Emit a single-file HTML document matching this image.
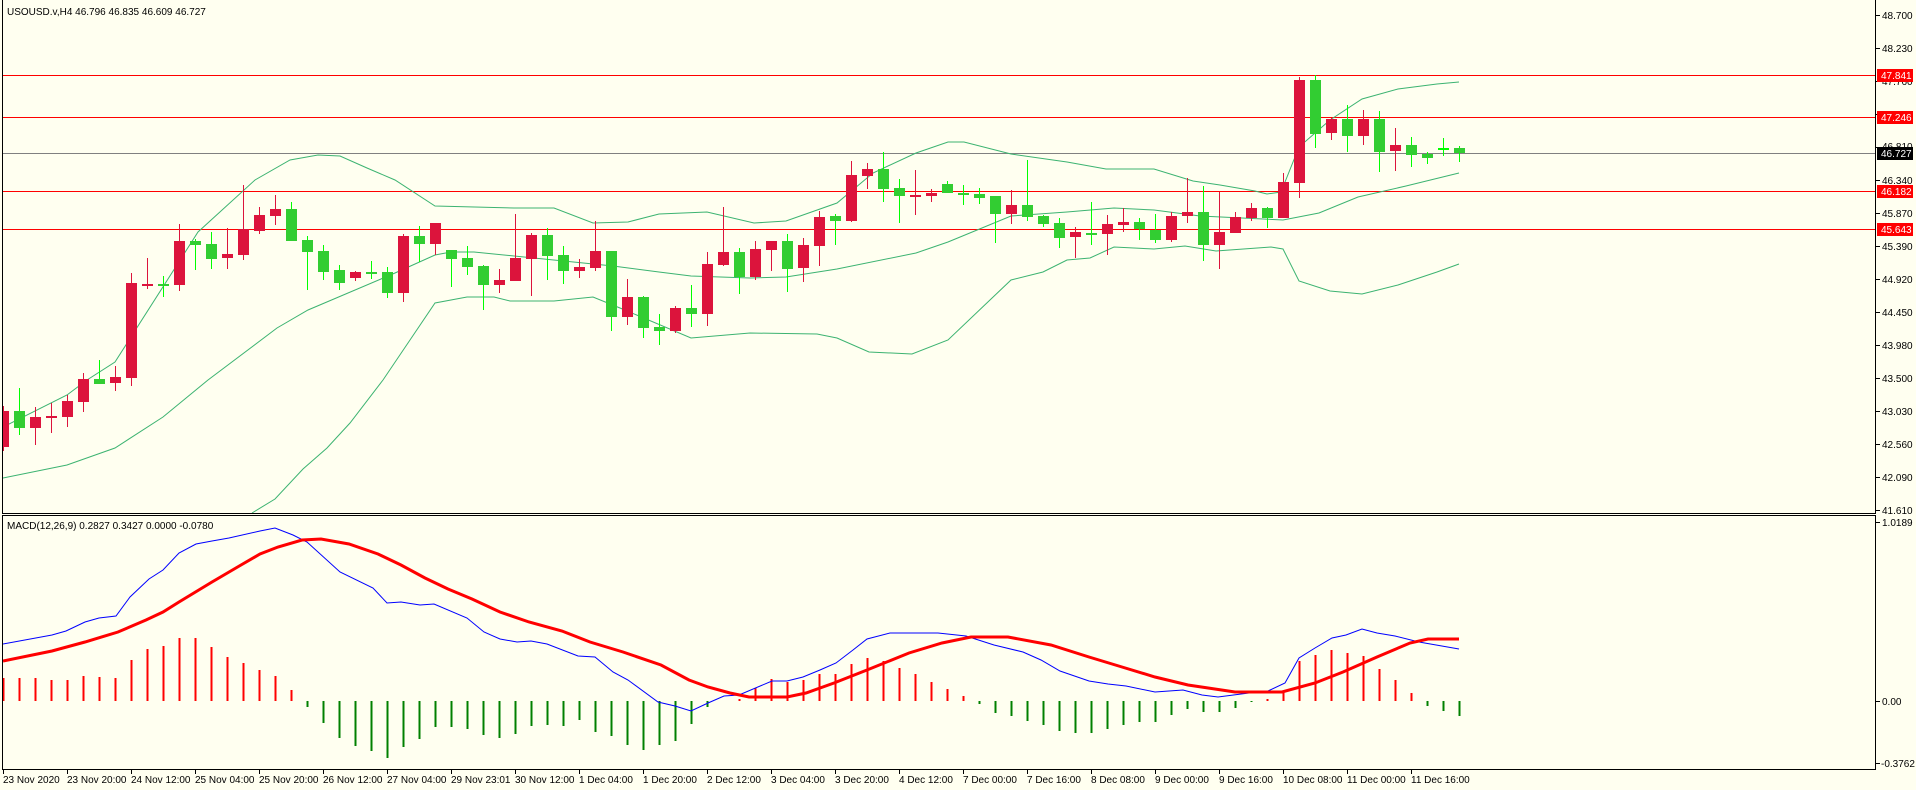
<!DOCTYPE html>
<html><head><meta charset="utf-8"><style>
html,body{margin:0;padding:0;background:#FFFFF0;}
svg{display:block;}
text{font-family:"Liberation Sans",sans-serif;font-size:10px;fill:#000;}
</style></head><body>
<svg width="1916" height="790" viewBox="0 0 1916 790" xmlns="http://www.w3.org/2000/svg">
<rect x="0" y="0" width="1916" height="790" fill="#FFFFF0"/>
<defs>
<clipPath id="mc"><rect x="3" y="0" width="1872" height="513"/></clipPath>
<clipPath id="dc"><rect x="3" y="516" width="1872" height="253"/></clipPath>
</defs>
<g clip-path="url(#mc)">
<!-- horizontal lines -->
<line x1="3" y1="75.5" x2="1875" y2="75.5" stroke="#f00" stroke-width="1"/>
<line x1="3" y1="117.5" x2="1875" y2="117.5" stroke="#f00" stroke-width="1"/>
<line x1="3" y1="153.5" x2="1875" y2="153.5" stroke="#808080" stroke-width="1"/>
<line x1="3" y1="191.5" x2="1875" y2="191.5" stroke="#f00" stroke-width="1"/>
<line x1="3" y1="229.5" x2="1875" y2="229.5" stroke="#f00" stroke-width="1"/>
<!-- bollinger -->
<g fill="none" stroke="#3CB371" stroke-width="1">
<polyline points="3,427 67,395 87,380 115,362 198,232 255,180 290,160 318,155 340,156 367,168 395,180 435,206 514,208 554,208 593,223 628,222 659,214 707,212 754,223 786,221 837,203 873,173 916,153 948,142 964,142 1011,154 1067,162 1106,169 1154,169 1193,181 1220,185 1255,191 1267,194 1281,192 1299,147 1330,120 1362,99 1398,89 1437,84 1459,82"/>
<polyline points="3,478 67,465 115,448 163,417 208,380 277,328 308,310 395,273 435,255 451,252 474,252 613,266 659,272 691,276 750,278 786,277 837,269 916,253 948,242 1011,216 1067,212 1114,208 1154,210 1200,216 1283,220 1319,213 1358,197 1406,186 1459,173"/>
<polyline points="252,513 275,499 303,469 327,448 350,423 383,380 410,340 435,303 467,297 494,297 510,301 554,301 593,297 620,308 691,338 750,333 817,334 837,338 869,352 912,354 948,340 1011,280 1043,272 1067,260 1090,258 1114,247 1154,249 1185,246 1216,251 1271,247 1283,249 1299,281 1330,291 1362,294 1398,285 1437,272 1459,264"/>
</g>
<!-- candles -->
<g id="candles">
<rect x="3" y="406" width="1" height="45" fill="#DC143C"/><rect x="-2" y="411" width="11" height="36" fill="#DC143C"/>
<rect x="19" y="388" width="1" height="47" fill="#00FF00"/><rect x="14" y="411" width="11" height="17" fill="#32CD32"/>
<rect x="35" y="407" width="1" height="38" fill="#DC143C"/><rect x="30" y="417" width="11" height="11" fill="#DC143C"/>
<rect x="51" y="403" width="1" height="30" fill="#DC143C"/><rect x="46" y="416" width="11" height="2" fill="#DC143C"/>
<rect x="67" y="395" width="1" height="32" fill="#DC143C"/><rect x="62" y="401" width="11" height="16" fill="#DC143C"/>
<rect x="83" y="373" width="1" height="39" fill="#DC143C"/><rect x="78" y="379" width="11" height="23" fill="#DC143C"/>
<rect x="99" y="360" width="1" height="24" fill="#00FF00"/><rect x="94" y="379" width="11" height="5" fill="#32CD32"/>
<rect x="115" y="366" width="1" height="25" fill="#DC143C"/><rect x="110" y="377" width="11" height="6" fill="#DC143C"/>
<rect x="131" y="273" width="1" height="113" fill="#DC143C"/><rect x="126" y="283" width="11" height="95" fill="#DC143C"/>
<rect x="147" y="258" width="1" height="31" fill="#DC143C"/><rect x="142" y="284" width="11" height="2" fill="#DC143C"/>
<rect x="163" y="276" width="1" height="21" fill="#00FF00"/><rect x="158" y="284" width="11" height="2" fill="#32CD32"/>
<rect x="179" y="224" width="1" height="67" fill="#DC143C"/><rect x="174" y="241" width="11" height="44" fill="#DC143C"/>
<rect x="195" y="239" width="1" height="31" fill="#00FF00"/><rect x="190" y="241" width="11" height="4" fill="#32CD32"/>
<rect x="211" y="232" width="1" height="37" fill="#00FF00"/><rect x="206" y="244" width="11" height="15" fill="#32CD32"/>
<rect x="227" y="228" width="1" height="41" fill="#DC143C"/><rect x="222" y="254" width="11" height="4" fill="#DC143C"/>
<rect x="243" y="185" width="1" height="75" fill="#DC143C"/><rect x="238" y="229" width="11" height="26" fill="#DC143C"/>
<rect x="259" y="207" width="1" height="27" fill="#DC143C"/><rect x="254" y="215" width="11" height="16" fill="#DC143C"/>
<rect x="275" y="195" width="1" height="30" fill="#DC143C"/><rect x="270" y="209" width="11" height="7" fill="#DC143C"/>
<rect x="291" y="202" width="1" height="39" fill="#00FF00"/><rect x="286" y="209" width="11" height="32" fill="#32CD32"/>
<rect x="307" y="236" width="1" height="54" fill="#00FF00"/><rect x="302" y="240" width="11" height="12" fill="#32CD32"/>
<rect x="323" y="245" width="1" height="35" fill="#00FF00"/><rect x="318" y="251" width="11" height="21" fill="#32CD32"/>
<rect x="339" y="265" width="1" height="25" fill="#00FF00"/><rect x="334" y="270" width="11" height="13" fill="#32CD32"/>
<rect x="355" y="271" width="1" height="10" fill="#DC143C"/><rect x="350" y="272" width="11" height="6" fill="#DC143C"/>
<rect x="371" y="261" width="1" height="18" fill="#00FF00"/><rect x="366" y="272" width="11" height="2" fill="#32CD32"/>
<rect x="387" y="267" width="1" height="31" fill="#00FF00"/><rect x="382" y="272" width="11" height="21" fill="#32CD32"/>
<rect x="403" y="234" width="1" height="68" fill="#DC143C"/><rect x="398" y="236" width="11" height="57" fill="#DC143C"/>
<rect x="419" y="226" width="1" height="36" fill="#00FF00"/><rect x="414" y="236" width="11" height="8" fill="#32CD32"/>
<rect x="435" y="223" width="1" height="32" fill="#DC143C"/><rect x="430" y="223" width="11" height="21" fill="#DC143C"/>
<rect x="451" y="250" width="1" height="37" fill="#00FF00"/><rect x="446" y="250" width="11" height="9" fill="#32CD32"/>
<rect x="467" y="246" width="1" height="29" fill="#00FF00"/><rect x="462" y="258" width="11" height="9" fill="#32CD32"/>
<rect x="483" y="265" width="1" height="45" fill="#00FF00"/><rect x="478" y="266" width="11" height="19" fill="#32CD32"/>
<rect x="499" y="269" width="1" height="24" fill="#DC143C"/><rect x="494" y="280" width="11" height="5" fill="#DC143C"/>
<rect x="515" y="214" width="1" height="67" fill="#DC143C"/><rect x="510" y="258" width="11" height="23" fill="#DC143C"/>
<rect x="531" y="233" width="1" height="63" fill="#DC143C"/><rect x="526" y="235" width="11" height="24" fill="#DC143C"/>
<rect x="547" y="228" width="1" height="52" fill="#00FF00"/><rect x="542" y="235" width="11" height="21" fill="#32CD32"/>
<rect x="563" y="246" width="1" height="38" fill="#00FF00"/><rect x="558" y="255" width="11" height="16" fill="#32CD32"/>
<rect x="579" y="259" width="1" height="19" fill="#DC143C"/><rect x="574" y="267" width="11" height="4" fill="#DC143C"/>
<rect x="595" y="221" width="1" height="50" fill="#DC143C"/><rect x="590" y="251" width="11" height="17" fill="#DC143C"/>
<rect x="611" y="251" width="1" height="80" fill="#00FF00"/><rect x="606" y="251" width="11" height="66" fill="#32CD32"/>
<rect x="627" y="279" width="1" height="46" fill="#DC143C"/><rect x="622" y="297" width="11" height="20" fill="#DC143C"/>
<rect x="643" y="296" width="1" height="42" fill="#00FF00"/><rect x="638" y="297" width="11" height="31" fill="#32CD32"/>
<rect x="659" y="314" width="1" height="31" fill="#00FF00"/><rect x="654" y="327" width="11" height="4" fill="#32CD32"/>
<rect x="675" y="306" width="1" height="27" fill="#DC143C"/><rect x="670" y="308" width="11" height="23" fill="#DC143C"/>
<rect x="691" y="285" width="1" height="42" fill="#00FF00"/><rect x="686" y="308" width="11" height="6" fill="#32CD32"/>
<rect x="707" y="252" width="1" height="74" fill="#DC143C"/><rect x="702" y="264" width="11" height="50" fill="#DC143C"/>
<rect x="723" y="207" width="1" height="59" fill="#DC143C"/><rect x="718" y="252" width="11" height="13" fill="#DC143C"/>
<rect x="739" y="248" width="1" height="46" fill="#00FF00"/><rect x="734" y="252" width="11" height="25" fill="#32CD32"/>
<rect x="755" y="241" width="1" height="39" fill="#DC143C"/><rect x="750" y="249" width="11" height="28" fill="#DC143C"/>
<rect x="771" y="241" width="1" height="30" fill="#DC143C"/><rect x="766" y="241" width="11" height="9" fill="#DC143C"/>
<rect x="787" y="234" width="1" height="58" fill="#00FF00"/><rect x="782" y="241" width="11" height="28" fill="#32CD32"/>
<rect x="803" y="238" width="1" height="44" fill="#DC143C"/><rect x="798" y="245" width="11" height="23" fill="#DC143C"/>
<rect x="819" y="211" width="1" height="55" fill="#DC143C"/><rect x="814" y="217" width="11" height="29" fill="#DC143C"/>
<rect x="835" y="214" width="1" height="31" fill="#00FF00"/><rect x="830" y="216" width="11" height="5" fill="#32CD32"/>
<rect x="851" y="161" width="1" height="61" fill="#DC143C"/><rect x="846" y="175" width="11" height="46" fill="#DC143C"/>
<rect x="867" y="163" width="1" height="26" fill="#DC143C"/><rect x="862" y="169" width="11" height="7" fill="#DC143C"/>
<rect x="883" y="152" width="1" height="50" fill="#00FF00"/><rect x="878" y="169" width="11" height="20" fill="#32CD32"/>
<rect x="899" y="179" width="1" height="44" fill="#00FF00"/><rect x="894" y="188" width="11" height="8" fill="#32CD32"/>
<rect x="915" y="170" width="1" height="45" fill="#DC143C"/><rect x="910" y="195" width="11" height="2" fill="#DC143C"/>
<rect x="931" y="189" width="1" height="13" fill="#DC143C"/><rect x="926" y="193" width="11" height="3" fill="#DC143C"/>
<rect x="947" y="181" width="1" height="12" fill="#00FF00"/><rect x="942" y="184" width="11" height="9" fill="#32CD32"/>
<rect x="963" y="185" width="1" height="20" fill="#00FF00"/><rect x="958" y="193" width="11" height="2" fill="#32CD32"/>
<rect x="979" y="188" width="1" height="16" fill="#00FF00"/><rect x="974" y="194" width="11" height="4" fill="#32CD32"/>
<rect x="995" y="196" width="1" height="47" fill="#00FF00"/><rect x="990" y="196" width="11" height="18" fill="#32CD32"/>
<rect x="1011" y="190" width="1" height="34" fill="#DC143C"/><rect x="1006" y="205" width="11" height="9" fill="#DC143C"/>
<rect x="1027" y="160" width="1" height="61" fill="#00FF00"/><rect x="1022" y="205" width="11" height="12" fill="#32CD32"/>
<rect x="1043" y="215" width="1" height="12" fill="#00FF00"/><rect x="1038" y="216" width="11" height="8" fill="#32CD32"/>
<rect x="1059" y="218" width="1" height="30" fill="#00FF00"/><rect x="1054" y="223" width="11" height="15" fill="#32CD32"/>
<rect x="1075" y="227" width="1" height="31" fill="#DC143C"/><rect x="1070" y="232" width="11" height="5" fill="#DC143C"/>
<rect x="1091" y="202" width="1" height="43" fill="#00FF00"/><rect x="1086" y="233" width="11" height="2" fill="#32CD32"/>
<rect x="1107" y="215" width="1" height="40" fill="#DC143C"/><rect x="1102" y="224" width="11" height="10" fill="#DC143C"/>
<rect x="1123" y="208" width="1" height="24" fill="#DC143C"/><rect x="1118" y="222" width="11" height="3" fill="#DC143C"/>
<rect x="1139" y="218" width="1" height="22" fill="#00FF00"/><rect x="1134" y="222" width="11" height="7" fill="#32CD32"/>
<rect x="1155" y="214" width="1" height="29" fill="#00FF00"/><rect x="1150" y="230" width="11" height="10" fill="#32CD32"/>
<rect x="1171" y="212" width="1" height="30" fill="#DC143C"/><rect x="1166" y="216" width="11" height="24" fill="#DC143C"/>
<rect x="1187" y="178" width="1" height="45" fill="#DC143C"/><rect x="1182" y="212" width="11" height="4" fill="#DC143C"/>
<rect x="1203" y="186" width="1" height="75" fill="#00FF00"/><rect x="1198" y="212" width="11" height="33" fill="#32CD32"/>
<rect x="1219" y="192" width="1" height="77" fill="#DC143C"/><rect x="1214" y="232" width="11" height="13" fill="#DC143C"/>
<rect x="1235" y="212" width="1" height="21" fill="#DC143C"/><rect x="1230" y="217" width="11" height="16" fill="#DC143C"/>
<rect x="1251" y="203" width="1" height="18" fill="#DC143C"/><rect x="1246" y="208" width="11" height="10" fill="#DC143C"/>
<rect x="1267" y="207" width="1" height="21" fill="#00FF00"/><rect x="1262" y="208" width="11" height="10" fill="#32CD32"/>
<rect x="1283" y="173" width="1" height="45" fill="#DC143C"/><rect x="1278" y="182" width="11" height="36" fill="#DC143C"/>
<rect x="1299" y="77" width="1" height="121" fill="#DC143C"/><rect x="1294" y="80" width="11" height="103" fill="#DC143C"/>
<rect x="1315" y="75" width="1" height="73" fill="#00FF00"/><rect x="1310" y="80" width="11" height="54" fill="#32CD32"/>
<rect x="1331" y="118" width="1" height="22" fill="#DC143C"/><rect x="1326" y="119" width="11" height="14" fill="#DC143C"/>
<rect x="1347" y="105" width="1" height="47" fill="#00FF00"/><rect x="1342" y="119" width="11" height="17" fill="#32CD32"/>
<rect x="1363" y="110" width="1" height="35" fill="#DC143C"/><rect x="1358" y="119" width="11" height="17" fill="#DC143C"/>
<rect x="1379" y="111" width="1" height="61" fill="#00FF00"/><rect x="1374" y="119" width="11" height="33" fill="#32CD32"/>
<rect x="1395" y="128" width="1" height="43" fill="#DC143C"/><rect x="1390" y="145" width="11" height="6" fill="#DC143C"/>
<rect x="1411" y="137" width="1" height="30" fill="#00FF00"/><rect x="1406" y="145" width="11" height="10" fill="#32CD32"/>
<rect x="1427" y="152" width="1" height="12" fill="#00FF00"/><rect x="1422" y="154" width="11" height="4" fill="#32CD32"/>
<rect x="1443" y="138" width="1" height="18" fill="#00FF00"/><rect x="1438" y="148" width="11" height="2" fill="#00FF00"/>
<rect x="1459" y="146" width="1" height="16" fill="#00FF00"/><rect x="1454" y="148" width="11" height="5" fill="#32CD32"/>
</g>
</g>
<!-- MACD pane -->
<g clip-path="url(#dc)">
<g stroke-width="2">
<line x1="3.5" y1="701" x2="3.5" y2="678" stroke="#f00"/>
<line x1="19.5" y1="701" x2="19.5" y2="678" stroke="#f00"/>
<line x1="35.5" y1="701" x2="35.5" y2="678" stroke="#f00"/>
<line x1="51.5" y1="701" x2="51.5" y2="680" stroke="#f00"/>
<line x1="67.5" y1="701" x2="67.5" y2="680" stroke="#f00"/>
<line x1="83.5" y1="701" x2="83.5" y2="676" stroke="#f00"/>
<line x1="99.5" y1="701" x2="99.5" y2="677" stroke="#f00"/>
<line x1="115.5" y1="701" x2="115.5" y2="678" stroke="#f00"/>
<line x1="131.5" y1="701" x2="131.5" y2="660" stroke="#f00"/>
<line x1="147.5" y1="701" x2="147.5" y2="649" stroke="#f00"/>
<line x1="163.5" y1="701" x2="163.5" y2="646" stroke="#f00"/>
<line x1="179.5" y1="701" x2="179.5" y2="638" stroke="#f00"/>
<line x1="195.5" y1="701" x2="195.5" y2="638" stroke="#f00"/>
<line x1="211.5" y1="701" x2="211.5" y2="647" stroke="#f00"/>
<line x1="227.5" y1="701" x2="227.5" y2="657" stroke="#f00"/>
<line x1="243.5" y1="701" x2="243.5" y2="663" stroke="#f00"/>
<line x1="259.5" y1="701" x2="259.5" y2="670" stroke="#f00"/>
<line x1="275.5" y1="701" x2="275.5" y2="676" stroke="#f00"/>
<line x1="291.5" y1="701" x2="291.5" y2="690" stroke="#f00"/>
<line x1="307.5" y1="701" x2="307.5" y2="707" stroke="#008000"/>
<line x1="323.5" y1="701" x2="323.5" y2="723" stroke="#008000"/>
<line x1="339.5" y1="701" x2="339.5" y2="738" stroke="#008000"/>
<line x1="355.5" y1="701" x2="355.5" y2="746" stroke="#008000"/>
<line x1="371.5" y1="701" x2="371.5" y2="751" stroke="#008000"/>
<line x1="387.5" y1="701" x2="387.5" y2="758" stroke="#008000"/>
<line x1="403.5" y1="701" x2="403.5" y2="747" stroke="#008000"/>
<line x1="419.5" y1="701" x2="419.5" y2="739" stroke="#008000"/>
<line x1="435.5" y1="701" x2="435.5" y2="727" stroke="#008000"/>
<line x1="451.5" y1="701" x2="451.5" y2="727" stroke="#008000"/>
<line x1="467.5" y1="701" x2="467.5" y2="729" stroke="#008000"/>
<line x1="483.5" y1="701" x2="483.5" y2="735" stroke="#008000"/>
<line x1="499.5" y1="701" x2="499.5" y2="738" stroke="#008000"/>
<line x1="515.5" y1="701" x2="515.5" y2="734" stroke="#008000"/>
<line x1="531.5" y1="701" x2="531.5" y2="726" stroke="#008000"/>
<line x1="547.5" y1="701" x2="547.5" y2="725" stroke="#008000"/>
<line x1="563.5" y1="701" x2="563.5" y2="726" stroke="#008000"/>
<line x1="579.5" y1="701" x2="579.5" y2="720" stroke="#008000"/>
<line x1="595.5" y1="701" x2="595.5" y2="732" stroke="#008000"/>
<line x1="611.5" y1="701" x2="611.5" y2="736" stroke="#008000"/>
<line x1="627.5" y1="701" x2="627.5" y2="745" stroke="#008000"/>
<line x1="643.5" y1="701" x2="643.5" y2="750" stroke="#008000"/>
<line x1="659.5" y1="701" x2="659.5" y2="745" stroke="#008000"/>
<line x1="675.5" y1="701" x2="675.5" y2="741" stroke="#008000"/>
<line x1="691.5" y1="701" x2="691.5" y2="724" stroke="#008000"/>
<line x1="707.5" y1="701" x2="707.5" y2="707" stroke="#008000"/>
<line x1="739.5" y1="701" x2="739.5" y2="699" stroke="#f00"/>
<line x1="755.5" y1="701" x2="755.5" y2="688" stroke="#f00"/>
<line x1="771.5" y1="701" x2="771.5" y2="679" stroke="#f00"/>
<line x1="787.5" y1="701" x2="787.5" y2="682" stroke="#f00"/>
<line x1="803.5" y1="701" x2="803.5" y2="680" stroke="#f00"/>
<line x1="819.5" y1="701" x2="819.5" y2="674" stroke="#f00"/>
<line x1="835.5" y1="701" x2="835.5" y2="674" stroke="#f00"/>
<line x1="851.5" y1="701" x2="851.5" y2="664" stroke="#f00"/>
<line x1="867.5" y1="701" x2="867.5" y2="658" stroke="#f00"/>
<line x1="883.5" y1="701" x2="883.5" y2="661" stroke="#f00"/>
<line x1="899.5" y1="701" x2="899.5" y2="668" stroke="#f00"/>
<line x1="915.5" y1="701" x2="915.5" y2="674" stroke="#f00"/>
<line x1="931.5" y1="701" x2="931.5" y2="682" stroke="#f00"/>
<line x1="947.5" y1="701" x2="947.5" y2="689" stroke="#f00"/>
<line x1="963.5" y1="701" x2="963.5" y2="696" stroke="#f00"/>
<line x1="979.5" y1="701" x2="979.5" y2="704" stroke="#008000"/>
<line x1="995.5" y1="701" x2="995.5" y2="713" stroke="#008000"/>
<line x1="1011.5" y1="701" x2="1011.5" y2="716" stroke="#008000"/>
<line x1="1027.5" y1="701" x2="1027.5" y2="721" stroke="#008000"/>
<line x1="1043.5" y1="701" x2="1043.5" y2="725" stroke="#008000"/>
<line x1="1059.5" y1="701" x2="1059.5" y2="731" stroke="#008000"/>
<line x1="1075.5" y1="701" x2="1075.5" y2="733" stroke="#008000"/>
<line x1="1091.5" y1="701" x2="1091.5" y2="733" stroke="#008000"/>
<line x1="1107.5" y1="701" x2="1107.5" y2="729" stroke="#008000"/>
<line x1="1123.5" y1="701" x2="1123.5" y2="725" stroke="#008000"/>
<line x1="1139.5" y1="701" x2="1139.5" y2="722" stroke="#008000"/>
<line x1="1155.5" y1="701" x2="1155.5" y2="722" stroke="#008000"/>
<line x1="1171.5" y1="701" x2="1171.5" y2="715" stroke="#008000"/>
<line x1="1187.5" y1="701" x2="1187.5" y2="709" stroke="#008000"/>
<line x1="1203.5" y1="701" x2="1203.5" y2="712" stroke="#008000"/>
<line x1="1219.5" y1="701" x2="1219.5" y2="712" stroke="#008000"/>
<line x1="1235.5" y1="701" x2="1235.5" y2="708" stroke="#008000"/>
<line x1="1251.5" y1="701" x2="1251.5" y2="702" stroke="#008000"/>
<line x1="1267.5" y1="701" x2="1267.5" y2="699" stroke="#f00"/>
<line x1="1283.5" y1="701" x2="1283.5" y2="692" stroke="#f00"/>
<line x1="1299.5" y1="701" x2="1299.5" y2="661" stroke="#f00"/>
<line x1="1315.5" y1="701" x2="1315.5" y2="655" stroke="#f00"/>
<line x1="1331.5" y1="701" x2="1331.5" y2="650" stroke="#f00"/>
<line x1="1347.5" y1="701" x2="1347.5" y2="653" stroke="#f00"/>
<line x1="1363.5" y1="701" x2="1363.5" y2="656" stroke="#f00"/>
<line x1="1379.5" y1="701" x2="1379.5" y2="669" stroke="#f00"/>
<line x1="1395.5" y1="701" x2="1395.5" y2="680" stroke="#f00"/>
<line x1="1411.5" y1="701" x2="1411.5" y2="693" stroke="#f00"/>
<line x1="1427.5" y1="701" x2="1427.5" y2="706" stroke="#008000"/>
<line x1="1443.5" y1="701" x2="1443.5" y2="711" stroke="#008000"/>
<line x1="1459.5" y1="701" x2="1459.5" y2="716" stroke="#008000"/>
</g>
<polyline fill="none" stroke="#0000FF" stroke-width="1" points="3,644 52,635 66,631 85,622 99,618 116,616 130,597 149,579 163,570 179,553 196,544 212,541 229,538 260,531 275,528 293,535 307,542 340,572 373,588 387,603 401,602 420,605 434,604 467,618 484,632 500,639 517,642 531,641 547,644 578,656 595,657 613,672 628,680 658,702 675,706 691,711 708,703 724,696 739,695 772,681 787,681 803,677 820,670 836,663 853,650 867,639 890,633 938,633 966,636 994,645 1023,652 1041,660 1060,671 1089,681 1108,684 1126,686 1155,692 1183,690 1202,695 1218,697 1249,693 1268,691 1285,683 1299,658 1315,648 1332,638 1346,635 1362,629 1377,633 1395,636 1419,642 1459,649"/>
<polyline fill="none" stroke="#FF0000" stroke-width="3" points="3,661 52,651 85,642 118,632 146,620 163,612 179,602 212,582 241,565 260,554 278,547 302,540 321,539 349,544 378,554 401,565 425,578 448,589 472,599 500,612 529,622 562,631 590,642 623,652 661,665 689,680 708,687 730,693 749,697 787,697 806,693 834,683 867,670 909,653 942,643 971,637 1008,637 1051,645 1089,657 1122,667 1155,677 1188,685 1235,692 1282,692 1315,683 1343,672 1377,657 1410,643 1428,639 1459,639"/>
</g>
<!-- borders -->
<g fill="#000">
<rect x="2" y="0" width="1" height="514"/>
<rect x="2" y="513" width="1874" height="1"/>
<rect x="1875" y="0" width="1" height="514"/>
<rect x="2" y="515" width="1874" height="1"/>
<rect x="2" y="515" width="1" height="255"/>
<rect x="1875" y="515" width="1" height="255"/>
<rect x="2" y="769" width="1874" height="1"/>
</g>
<text x="7" y="15">USOUSD.v,H4  46.796 46.835 46.609 46.727</text>
<text x="7" y="529">MACD(12,26,9) 0.2827 0.3427 0.0000 -0.0780</text>
<!-- price axis -->
<g fill="#000">
<rect x="1876" y="15" width="4" height="1"/><rect x="1876" y="48" width="4" height="1"/>
<rect x="1876" y="81" width="4" height="1"/><rect x="1876" y="114" width="4" height="1"/>
<rect x="1876" y="147" width="4" height="1"/><rect x="1876" y="180" width="4" height="1"/>
<rect x="1876" y="213" width="4" height="1"/><rect x="1876" y="246" width="4" height="1"/>
<rect x="1876" y="279" width="4" height="1"/><rect x="1876" y="312" width="4" height="1"/>
<rect x="1876" y="345" width="4" height="1"/><rect x="1876" y="378" width="4" height="1"/>
<rect x="1876" y="411" width="4" height="1"/><rect x="1876" y="444" width="4" height="1"/>
<rect x="1876" y="477" width="4" height="1"/><rect x="1876" y="510" width="4" height="1"/>
<rect x="1876" y="522" width="4" height="1"/><rect x="1876" y="701" width="4" height="1"/>
<rect x="1876" y="763" width="4" height="1"/>
</g>
<g>
<text x="1882" y="19">48.700</text>
<text x="1882" y="52">48.230</text>
<text x="1882" y="85">47.760</text>
<text x="1882" y="118">47.290</text>
<text x="1882" y="150">46.810</text>
<text x="1882" y="184">46.340</text>
<text x="1882" y="217">45.870</text>
<text x="1882" y="250">45.390</text>
<text x="1882" y="283">44.920</text>
<text x="1882" y="316">44.450</text>
<text x="1882" y="349">43.980</text>
<text x="1882" y="382">43.500</text>
<text x="1882" y="415">43.030</text>
<text x="1882" y="448">42.560</text>
<text x="1882" y="481">42.090</text>
<text x="1882" y="514">41.610</text>
<text x="1882" y="526">1.0189</text>
<text x="1882" y="705">0.00</text>
<text x="1881" y="767">-0.3762</text>
</g>
<rect x="1877" y="69" width="36" height="13" fill="#f00"/><text x="1881" y="79" style="fill:#fff">47.841</text>
<rect x="1877" y="111" width="36" height="13" fill="#f00"/><text x="1881" y="121" style="fill:#fff">47.246</text>
<rect x="1877" y="147" width="36" height="13" fill="#000"/><text x="1881" y="157" style="fill:#fff">46.727</text>
<rect x="1877" y="185" width="36" height="13" fill="#f00"/><text x="1881" y="195" style="fill:#fff">46.182</text>
<rect x="1877" y="223" width="36" height="13" fill="#f00"/><text x="1881" y="233" style="fill:#fff">45.643</text>
<!-- time axis -->
<g fill="#000">
<rect x="3" y="770" width="1" height="4"/><rect x="67" y="770" width="1" height="4"/><rect x="131" y="770" width="1" height="4"/><rect x="195" y="770" width="1" height="4"/><rect x="259" y="770" width="1" height="4"/><rect x="323" y="770" width="1" height="4"/><rect x="387" y="770" width="1" height="4"/><rect x="451" y="770" width="1" height="4"/><rect x="515" y="770" width="1" height="4"/><rect x="579" y="770" width="1" height="4"/><rect x="643" y="770" width="1" height="4"/><rect x="707" y="770" width="1" height="4"/><rect x="771" y="770" width="1" height="4"/><rect x="835" y="770" width="1" height="4"/><rect x="899" y="770" width="1" height="4"/><rect x="963" y="770" width="1" height="4"/><rect x="1027" y="770" width="1" height="4"/><rect x="1091" y="770" width="1" height="4"/><rect x="1155" y="770" width="1" height="4"/><rect x="1219" y="770" width="1" height="4"/><rect x="1283" y="770" width="1" height="4"/><rect x="1347" y="770" width="1" height="4"/><rect x="1411" y="770" width="1" height="4"/>
</g>
<g>
<text x="3" y="783">23 Nov 2020</text>
<text x="67" y="783">23 Nov 20:00</text>
<text x="131" y="783">24 Nov 12:00</text>
<text x="195" y="783">25 Nov 04:00</text>
<text x="259" y="783">25 Nov 20:00</text>
<text x="323" y="783">26 Nov 12:00</text>
<text x="387" y="783">27 Nov 04:00</text>
<text x="451" y="783">29 Nov 23:01</text>
<text x="515" y="783">30 Nov 12:00</text>
<text x="579" y="783">1 Dec 04:00</text>
<text x="643" y="783">1 Dec 20:00</text>
<text x="707" y="783">2 Dec 12:00</text>
<text x="771" y="783">3 Dec 04:00</text>
<text x="835" y="783">3 Dec 20:00</text>
<text x="899" y="783">4 Dec 12:00</text>
<text x="963" y="783">7 Dec 00:00</text>
<text x="1027" y="783">7 Dec 16:00</text>
<text x="1091" y="783">8 Dec 08:00</text>
<text x="1155" y="783">9 Dec 00:00</text>
<text x="1219" y="783">9 Dec 16:00</text>
<text x="1283" y="783">10 Dec 08:00</text>
<text x="1347" y="783">11 Dec 00:00</text>
<text x="1411" y="783">11 Dec 16:00</text>
</g>
</svg>
</body></html>
